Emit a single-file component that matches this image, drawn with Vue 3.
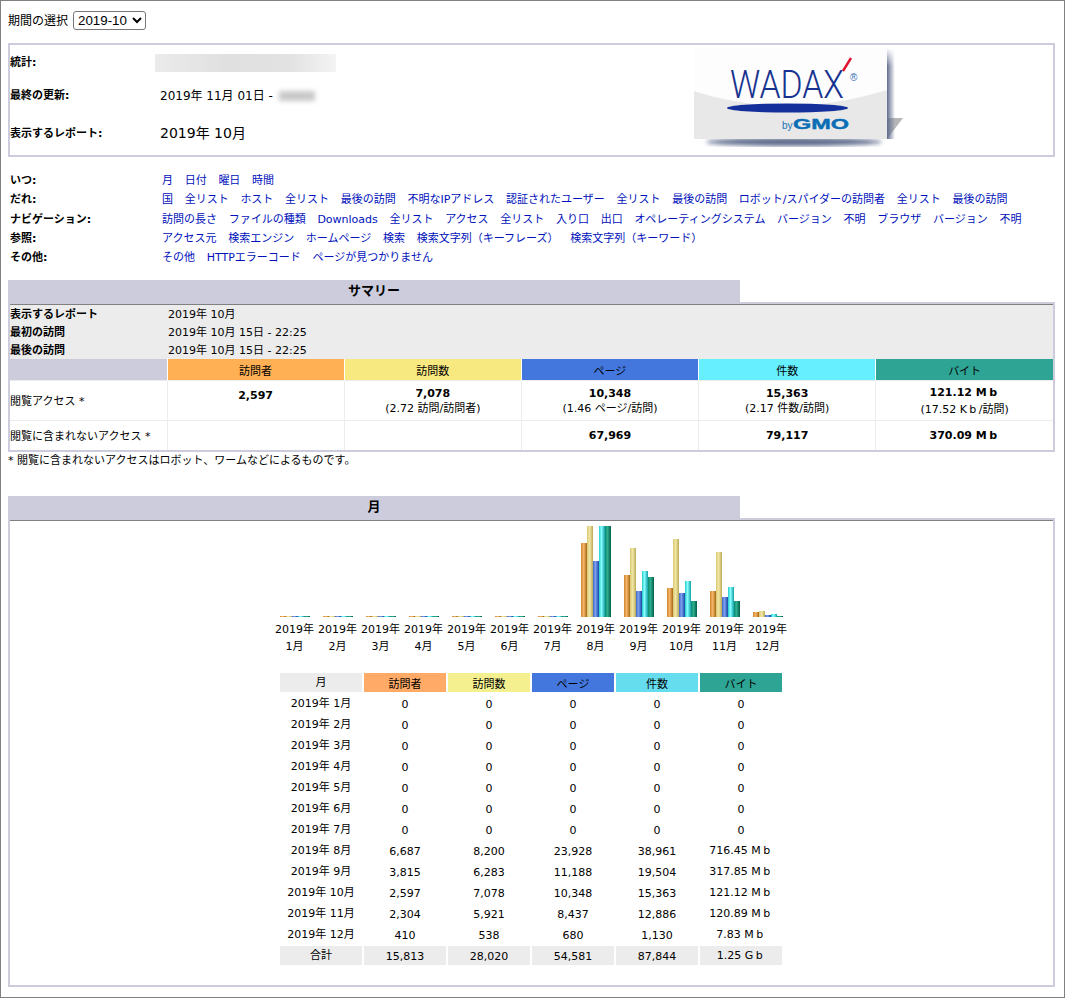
<script setup>
const navRows = [
  { label: 'いつ:', links: ['月', '日付', '曜日', '時間'] },
  { label: 'だれ:', links: ['国', '全リスト', 'ホスト', '全リスト', '最後の訪問', '不明なIPアドレス', '認証されたユーザー', '全リスト', '最後の訪問', 'ロボット/スパイダーの訪問者', '全リスト', '最後の訪問'] },
  { label: 'ナビゲーション:', links: ['訪問の長さ', 'ファイルの種類', 'Downloads', '全リスト', 'アクセス', '全リスト', '入り口', '出口', 'オペレーティングシステム', 'バージョン', '不明', 'ブラウザ', 'バージョン', '不明'] },
  { label: '参照:', links: ['アクセス元', '検索エンジン', 'ホームページ', '検索', '検索文字列（キーフレーズ）', '検索文字列（キーワード）'] },
  { label: 'その他:', links: ['その他', 'HTTPエラーコード', 'ページが見つかりません'] }
]

const barKinds = ['u', 'v', 'p', 'h', 'k']
const chart = [
  { m: '1月', h: [1, 1, 1, 1, 1] },
  { m: '2月', h: [1, 1, 1, 1, 1] },
  { m: '3月', h: [1, 1, 1, 1, 1] },
  { m: '4月', h: [1, 1, 1, 1, 1] },
  { m: '5月', h: [1, 1, 1, 1, 1] },
  { m: '6月', h: [1, 1, 1, 1, 1] },
  { m: '7月', h: [1, 1, 1, 1, 1] },
  { m: '8月', h: [74, 91, 56, 91, 91] },
  { m: '9月', h: [42, 69, 26, 46, 40] },
  { m: '10月', h: [29, 78, 24, 36, 16] },
  { m: '11月', h: [26, 65, 20, 30, 16] },
  { m: '12月', h: [5, 6, 2, 3, 1] }
]

const months = [
  ['2019年 1月', '0', '0', '0', '0', '0', ''],
  ['2019年 2月', '0', '0', '0', '0', '0', ''],
  ['2019年 3月', '0', '0', '0', '0', '0', ''],
  ['2019年 4月', '0', '0', '0', '0', '0', ''],
  ['2019年 5月', '0', '0', '0', '0', '0', ''],
  ['2019年 6月', '0', '0', '0', '0', '0', ''],
  ['2019年 7月', '0', '0', '0', '0', '0', ''],
  ['2019年 8月', '6,687', '8,200', '23,928', '38,961', '716.45 ', 'Mb'],
  ['2019年 9月', '3,815', '6,283', '11,188', '19,504', '317.85 ', 'Mb'],
  ['2019年 10月', '2,597', '7,078', '10,348', '15,363', '121.12 ', 'Mb'],
  ['2019年 11月', '2,304', '5,921', '8,437', '12,886', '120.89 ', 'Mb'],
  ['2019年 12月', '410', '538', '680', '1,130', '7.83 ', 'Mb']
]
</script>

<template>
  <div class="page">
    <div class="period">
      <span>期間の選択</span>
      <select class="period-select">
        <option>2019-10</option>
      </select>
    </div>

    <div class="head-box">
      <div class="head-info">
        <div class="head-row r1"><b>統計:</b><span class="blur-site"></span></div>
        <div class="head-row r2"><b>最終の更新:</b><span class="updated">2019年 11月 01日 - <i class="blur-time"></i></span></div>
        <div class="head-row r3"><b>表示するレポート:</b><span class="report">2019年 10月</span></div>
      </div>
      <svg class="logo" width="216" height="110" viewBox="0 0 216 110">
        <defs>
          <linearGradient id="sideShade" x1="0" x2="1" y1="0" y2="0">
            <stop offset="0" stop-color="#5f6c8c" />
            <stop offset="1" stop-color="#5f6c8c" stop-opacity="0" />
          </linearGradient>
          <linearGradient id="sideFade" x1="0" x2="0" y1="0" y2="1">
            <stop offset="0" stop-color="#fff" stop-opacity="0" />
            <stop offset="0.2" stop-color="#fff" />
          </linearGradient>
          <mask id="sideMask"><rect x="197" y="4" width="8" height="91" fill="url(#sideFade)" /></mask>
          <filter id="soft"><feGaussianBlur stdDeviation="2.2" /></filter>
        </defs>
        <ellipse cx="104" cy="98" rx="88" ry="4" fill="#5f6c8c" filter="url(#soft)" />
        <polygon points="197,74 213,74 197,95" fill="#b4b6b8" />
        <rect x="197" y="4" width="8" height="91" fill="url(#sideShade)" mask="url(#sideMask)" />
        <rect x="4" y="3" width="193" height="92" fill="#fdfdfd" />
        <path d="M4 47 Q 95 77 197 46 V95 H4 Z" fill="#e8e8e8" />
        <text x="40" y="54" class="logo-wadax" textLength="114" lengthAdjust="spacingAndGlyphs">WADAX</text>
        <line x1="161" y1="14" x2="153" y2="27" stroke="#e0122f" stroke-width="2.4" />
        <text x="160" y="37" class="logo-r">®</text>
        <ellipse cx="97.5" cy="64" rx="60.5" ry="4.5" fill="#15309a" />
        <text x="92" y="85" class="logo-by">by</text>
        <text x="103" y="85" class="logo-gmo" textLength="56" lengthAdjust="spacingAndGlyphs">GMO</text>
      </svg>
    </div>

    <div class="nav">
      <div v-for="row in navRows" :key="row.label" class="nav-row">
        <b class="nav-label">{{ row.label }}</b>
        <div class="nav-links">
          <a v-for="(l, i) in row.links" :key="i" href="#">{{ l }}</a>
        </div>
      </div>
    </div>

    <div class="sec-title">サマリー</div>
    <div class="sec-box">
      <div class="sum-info">
        <div class="sum-row"><b>表示するレポート</b><span>2019年 10月</span></div>
        <div class="sum-row"><b>最初の訪問</b><span>2019年 10月 15日 - 22:25</span></div>
        <div class="sum-row"><b>最後の訪問</b><span>2019年 10月 15日 - 22:25</span></div>
      </div>
      <table class="sum-table">
        <colgroup>
          <col class="c0" /><col /><col /><col /><col /><col />
        </colgroup>
        <tr class="sum-head">
          <th class="blank"></th>
          <th class="s-u">訪問者</th>
          <th class="s-v">訪問数</th>
          <th class="s-p">ページ</th>
          <th class="s-h">件数</th>
          <th class="s-k">バイト</th>
        </tr>
        <tr class="sum-r1">
          <td class="lbl">閲覧アクセス *</td>
          <td><b class="lift">2,597</b></td>
          <td><b>7,078</b><br />(2.72 訪問/訪問者)</td>
          <td><b>10,348</b><br />(1.46 ページ/訪問)</td>
          <td><b>15,363</b><br />(2.17 件数/訪問)</td>
          <td class="loose"><b>121.12 <span class="unit">Mb</span></b><br />(17.52 <span class="unit">Kb</span>/訪問)</td>
        </tr>
        <tr class="sum-r2">
          <td class="lbl">閲覧に含まれないアクセス *</td>
          <td></td>
          <td></td>
          <td><b>67,969</b></td>
          <td><b>79,117</b></td>
          <td><b>370.09 <span class="unit">Mb</span></b></td>
        </tr>
      </table>
    </div>
    <p class="note">* 閲覧に含まれないアクセスはロボット、ワームなどによるものです。</p>

    <div class="sec-title second">月</div>
    <div class="sec-box month-box">
      <div class="chart">
        <div v-for="c in chart" :key="c.m" class="chart-col">
          <div class="bars">
            <i
              v-for="(h, i) in c.h"
              :key="i"
              :class="'bar-' + barKinds[i]"
              :style="{ height: h + 'px' }"
            ></i>
          </div>
          <div class="chart-label">2019年<br />{{ c.m }}</div>
        </div>
      </div>
      <table class="month-table">
        <tr>
          <td class="grey">月</td>
          <td class="m-u">訪問者</td>
          <td class="m-v">訪問数</td>
          <td class="m-p">ページ</td>
          <td class="m-h">件数</td>
          <td class="m-k">バイト</td>
        </tr>
        <tr v-for="r in months" :key="r[0]">
          <td>{{ r[0] }}</td>
          <td>{{ r[1] }}</td>
          <td>{{ r[2] }}</td>
          <td>{{ r[3] }}</td>
          <td>{{ r[4] }}</td>
          <td :class="{ 'has-unit': r[6] }">{{ r[5] }}<span class="unit">{{ r[6] }}</span></td>
        </tr>
        <tr class="grey">
          <td>合計</td>
          <td>15,813</td>
          <td>28,020</td>
          <td>54,581</td>
          <td>87,844</td>
          <td class="has-unit">1.25 <span class="unit">Gb</span></td>
        </tr>
      </table>
    </div>
  </div>
</template>

<style scoped>
.page {
  box-sizing: border-box;
  width: 1065px;
  height: 998px;
  padding: 10px 7px 0;
  border: 1px solid #808080;
  font-family: "DejaVu Sans", "Noto Sans CJK JP", sans-serif;
  font-size: 11px;
  color: #000;
  background: #fff;
  overflow: hidden;
}

.period {
  display: flex;
  align-items: center;
  gap: 5px;
  height: 19px;
  font-size: 12px;
}

.period span {
  margin-top: -2px;
}

.period-select {
  width: 73px;
  height: 19px;
  padding: 0;
  font-family: "Liberation Sans", sans-serif;
  font-size: 13.33px;
  color: #000;
  background: #fff;
  border: 1px solid #767676;
  border-radius: 3px;
}

.head-box {
  display: flex;
  box-sizing: border-box;
  width: 1047px;
  height: 114px;
  margin-top: 13px;
  border: 2px solid #ccccdd;
}

.head-info {
  width: 680px;
  flex-shrink: 0;
}

.head-row {
  display: grid;
  grid-template-columns: 150px 1fr;
  align-items: center;
}

.head-row b,
.updated,
.report {
  margin-top: -2px;
}

.r1 { height: 33px; }
.r2 { height: 34px; }
.r3 { height: 42px; }

.blur-site {
  display: block;
  width: 181px;
  height: 18px;
  margin: 2px 0 0 -5px;
  background: linear-gradient(90deg, #ebebeb, #e0e0e0 40%, #e2e2e2 75%, #f4f4f4);
}

.updated {
  font-size: 12px;
}

.blur-time {
  display: inline-block;
  width: 36px;
  height: 10px;
  margin-left: 2px;
  vertical-align: -1px;
  background: #c8c8c8;
  filter: blur(2.5px);
}

.report {
  font-size: 14px;
}

.logo {
  display: block;
  margin-top: -1px;
}

.logo-wadax {
  font-family: Roboto, "Liberation Sans", sans-serif;
  font-size: 38px;
  font-weight: 300;
  fill: #17338f;
}

.logo-r {
  font-family: "Liberation Sans", sans-serif;
  font-size: 10px;
  fill: #2f6fb5;
}

.logo-by {
  font-family: "Liberation Sans", sans-serif;
  font-size: 10px;
  fill: #1673b8;
}

.logo-gmo {
  font-family: "Liberation Sans", sans-serif;
  font-size: 14px;
  font-weight: 700;
  fill: #0a6db5;
  stroke: #0a6db5;
  stroke-width: 0.4;
}

.nav {
  margin-top: 14px;
  padding-left: 2px;
}

.nav-row {
  display: flex;
  height: 19.25px;
  align-items: baseline;
  line-height: 19px;
}

.nav-label {
  width: 152px;
  flex-shrink: 0;
}

.nav-links {
  display: flex;
  align-items: baseline;
  gap: 11.7px;
  white-space: nowrap;
}

a {
  color: #0011bb;
  text-decoration: none;
}

.sec-title {
  box-sizing: border-box;
  width: 732px;
  height: 22px;
  margin-top: 13px;
  font-size: 13px;
  font-weight: 700;
  line-height: 22px;
  text-align: center;
  background: #ccccdd;
}

.sec-title.second {
  margin-top: 0;
}

.sec-box {
  box-sizing: border-box;
  width: 1047px;
  border: 2px solid #ccccdd;
}

.sum-info {
  border-top: 1px solid #808080;
  background: #ececec;
}

.sum-row {
  display: grid;
  grid-template-columns: 158px 1fr;
  align-items: start;
  box-sizing: border-box;
  height: 18px;
  padding-top: 2px;
  line-height: 15px;
}

.sum-table {
  width: 1043px;
  table-layout: fixed;
  border-collapse: collapse;
  border-spacing: 0;
}

.c0 {
  width: 157px;
}

.sum-table th {
  height: 21px;
  padding: 0;
  font-weight: 400;
  border-left: 1px solid #fff;
}

.sum-table .blank {
  border-left: 0;
  background: #ccccdd;
}

.s-u { background: #ffb055; }
.s-v { background: #f8e880; }
.s-p { background: #4477dd; }
.s-h { background: #66f0ff; }
.s-k { background: #2ea495; }

.sum-table td {
  padding: 0;
  line-height: 15px;
  text-align: center;
  border-left: 1px solid #ececec;
  border-top: 1px solid #ececec;
}

.sum-table td.lbl {
  box-sizing: border-box;
  padding-top: 2px;
  border-left: 0;
  text-align: left;
}

.sum-r1 td {
  height: 39px;
}

.sum-r2 td {
  height: 29px;
}

.lift {
  display: inline-block;
  margin-bottom: 10px;
}

.sum-table td.loose {
  line-height: 17px;
}

.unit {
  letter-spacing: 2.5px;
}

.note {
  margin: 2px 0 0;
  height: 42px;
  line-height: 14px;
}

.month-box {
  height: 469px;
}

.chart {
  display: flex;
  padding: 5px 0 0 263px;
  border-top: 1px solid #808080;
}

.chart-col {
  width: 43px;
  flex-shrink: 0;
  text-align: center;
}

.bars {
  display: flex;
  align-items: flex-end;
  height: 91px;
  margin-left: 7px;
}

.bars i {
  display: block;
  width: 6px;
}

.bar-u { background: linear-gradient(90deg, #cf8530, #f6b768 45%, #a56615); }
.bar-v { background: linear-gradient(90deg, #d8c674, #f2e8a4 45%, #b9a858); }
.bar-p { background: linear-gradient(90deg, #3c68c8, #7fa0ee 40%, #1648a6); }
.bar-h { background: linear-gradient(90deg, #1fcaca, #8affff 40%, #10a0a8); }
.bar-k { background: linear-gradient(90deg, #0a8a70, #2eae90 40%, #005f48); }

.chart-label {
  padding-top: 4px;
  line-height: 17px;
  white-space: nowrap;
}

.month-table {
  margin: 16px 0 0 268px;
  width: 506px;
  table-layout: fixed;
  border-collapse: separate;
  border-spacing: 2px;
}

.month-table td {
  box-sizing: border-box;
  height: 19px;
  padding: 0;
  text-align: center;
  white-space: nowrap;
}

.month-table tr + tr td {
  padding-top: 1px;
}

.month-table tr + tr td.has-unit {
  padding-top: 0;
}

.month-table tr td:first-child {
  padding: 0 0 3px;
}

.month-table .grey,
.month-table tr.grey td {
  background: #ececec;
}

.m-u { background: #ffaa66; }
.m-v { background: #f4f090; }
.m-p { background: #4477dd; }
.m-h { background: #66ddee; }
.m-k { background: #2ea495; }
</style>

<style>
html, body {
  margin: 0;
  background: #fff;
}
</style>
